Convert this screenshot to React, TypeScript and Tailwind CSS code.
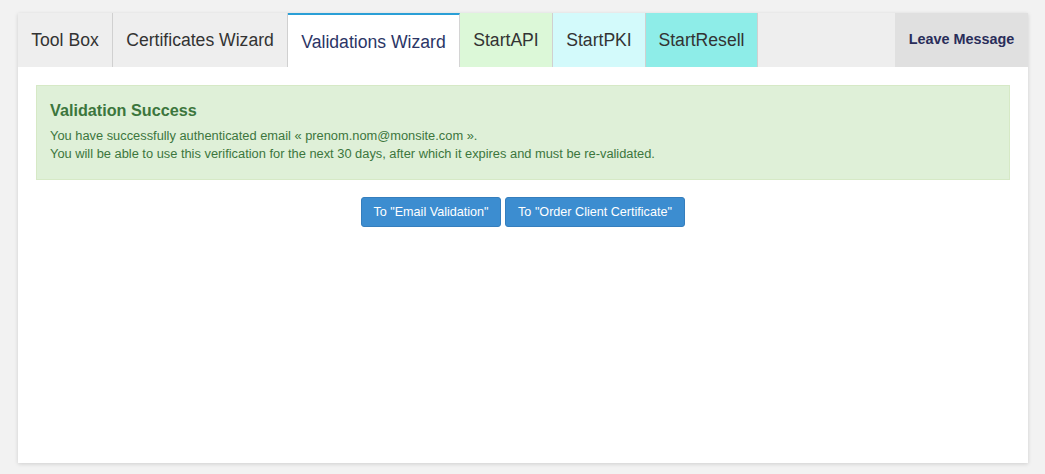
import React from 'react'

const tabs = [
  { label: 'Tool Box', cls: 'w-[95px] bg-[#eeeeee]' },
  { label: 'Certificates Wizard', cls: 'w-[175px] bg-[#eeeeee]' },
  { label: 'Validations Wizard', cls: 'w-[172px] bg-white', active: true },
  { label: 'StartAPI', cls: 'w-[93px] bg-[#dcf8d8]' },
  { label: 'StartPKI', cls: 'w-[93px] bg-[#d3fafb]' },
  { label: 'StartResell', cls: 'w-[112px] bg-[#8eede8]' },
]

export default function App() {
  return (
    <div
      className="min-h-[474px] bg-[#f2f2f2] pt-[13px] pl-[18px] pr-[17px] pb-[11px]"
      style={{ fontFamily: '"Liberation Sans", Arial, sans-serif' }}
    >
      <div className="bg-white h-[450px] shadow-[0_1px_4px_rgba(0,0,0,0.15)] flex flex-col">
        <div className="flex h-[54px] bg-[#eeeeee]">
          {tabs.map((t) =>
            t.active ? (
              <div
                key={t.label}
                className={`${t.cls} border-t-2 border-[#2a9fd6] border-r border-r-[#d4d4d4] flex items-center justify-center pt-[2px] text-[17.6px] text-[#2b3566]`}
              >
                {t.label}
              </div>
            ) : (
              <div
                key={t.label}
                className={`${t.cls} border-r border-[#d0d0d0] flex items-center justify-center text-[17.6px] text-[#333333]`}
              >
                {t.label}
              </div>
            )
          )}
          <div className="flex-1" />
          <div className="bg-[#e0e0e0] w-[133px] flex items-center justify-center text-[14.4px] font-bold text-[#2a2d5a]">
            Leave Message
          </div>
        </div>
        <div className="p-[18px]">
          <div className="bg-[#dff0d8] border border-[#d6e9c6] text-[#3c763d] px-[13px] pt-[15px] pb-[16px]">
            <div className="text-[16.2px] font-bold leading-[18px] mb-[8px]">Validation Success</div>
            <p className="text-[12.85px] leading-[18px]">
              You have successfully authenticated email « prenom.nom@monsite.com ».
            </p>
            <p className="text-[12.85px] leading-[18px]">
              You will be able to use this verification for the next 30 days, after which it expires and must be re-validated.
            </p>
          </div>
          <div className="flex justify-center gap-[4px] mt-[17px]">
            <button className="h-[30px] w-[140px] bg-[#3c8dd0] border border-[#357ebd] rounded-[3px] text-white text-[12.6px]">
              To "Email Validation"
            </button>
            <button className="h-[30px] w-[180px] bg-[#3c8dd0] border border-[#357ebd] rounded-[3px] text-white text-[12.6px]">
              To "Order Client Certificate"
            </button>
          </div>
        </div>
      </div>
    </div>
  )
}
